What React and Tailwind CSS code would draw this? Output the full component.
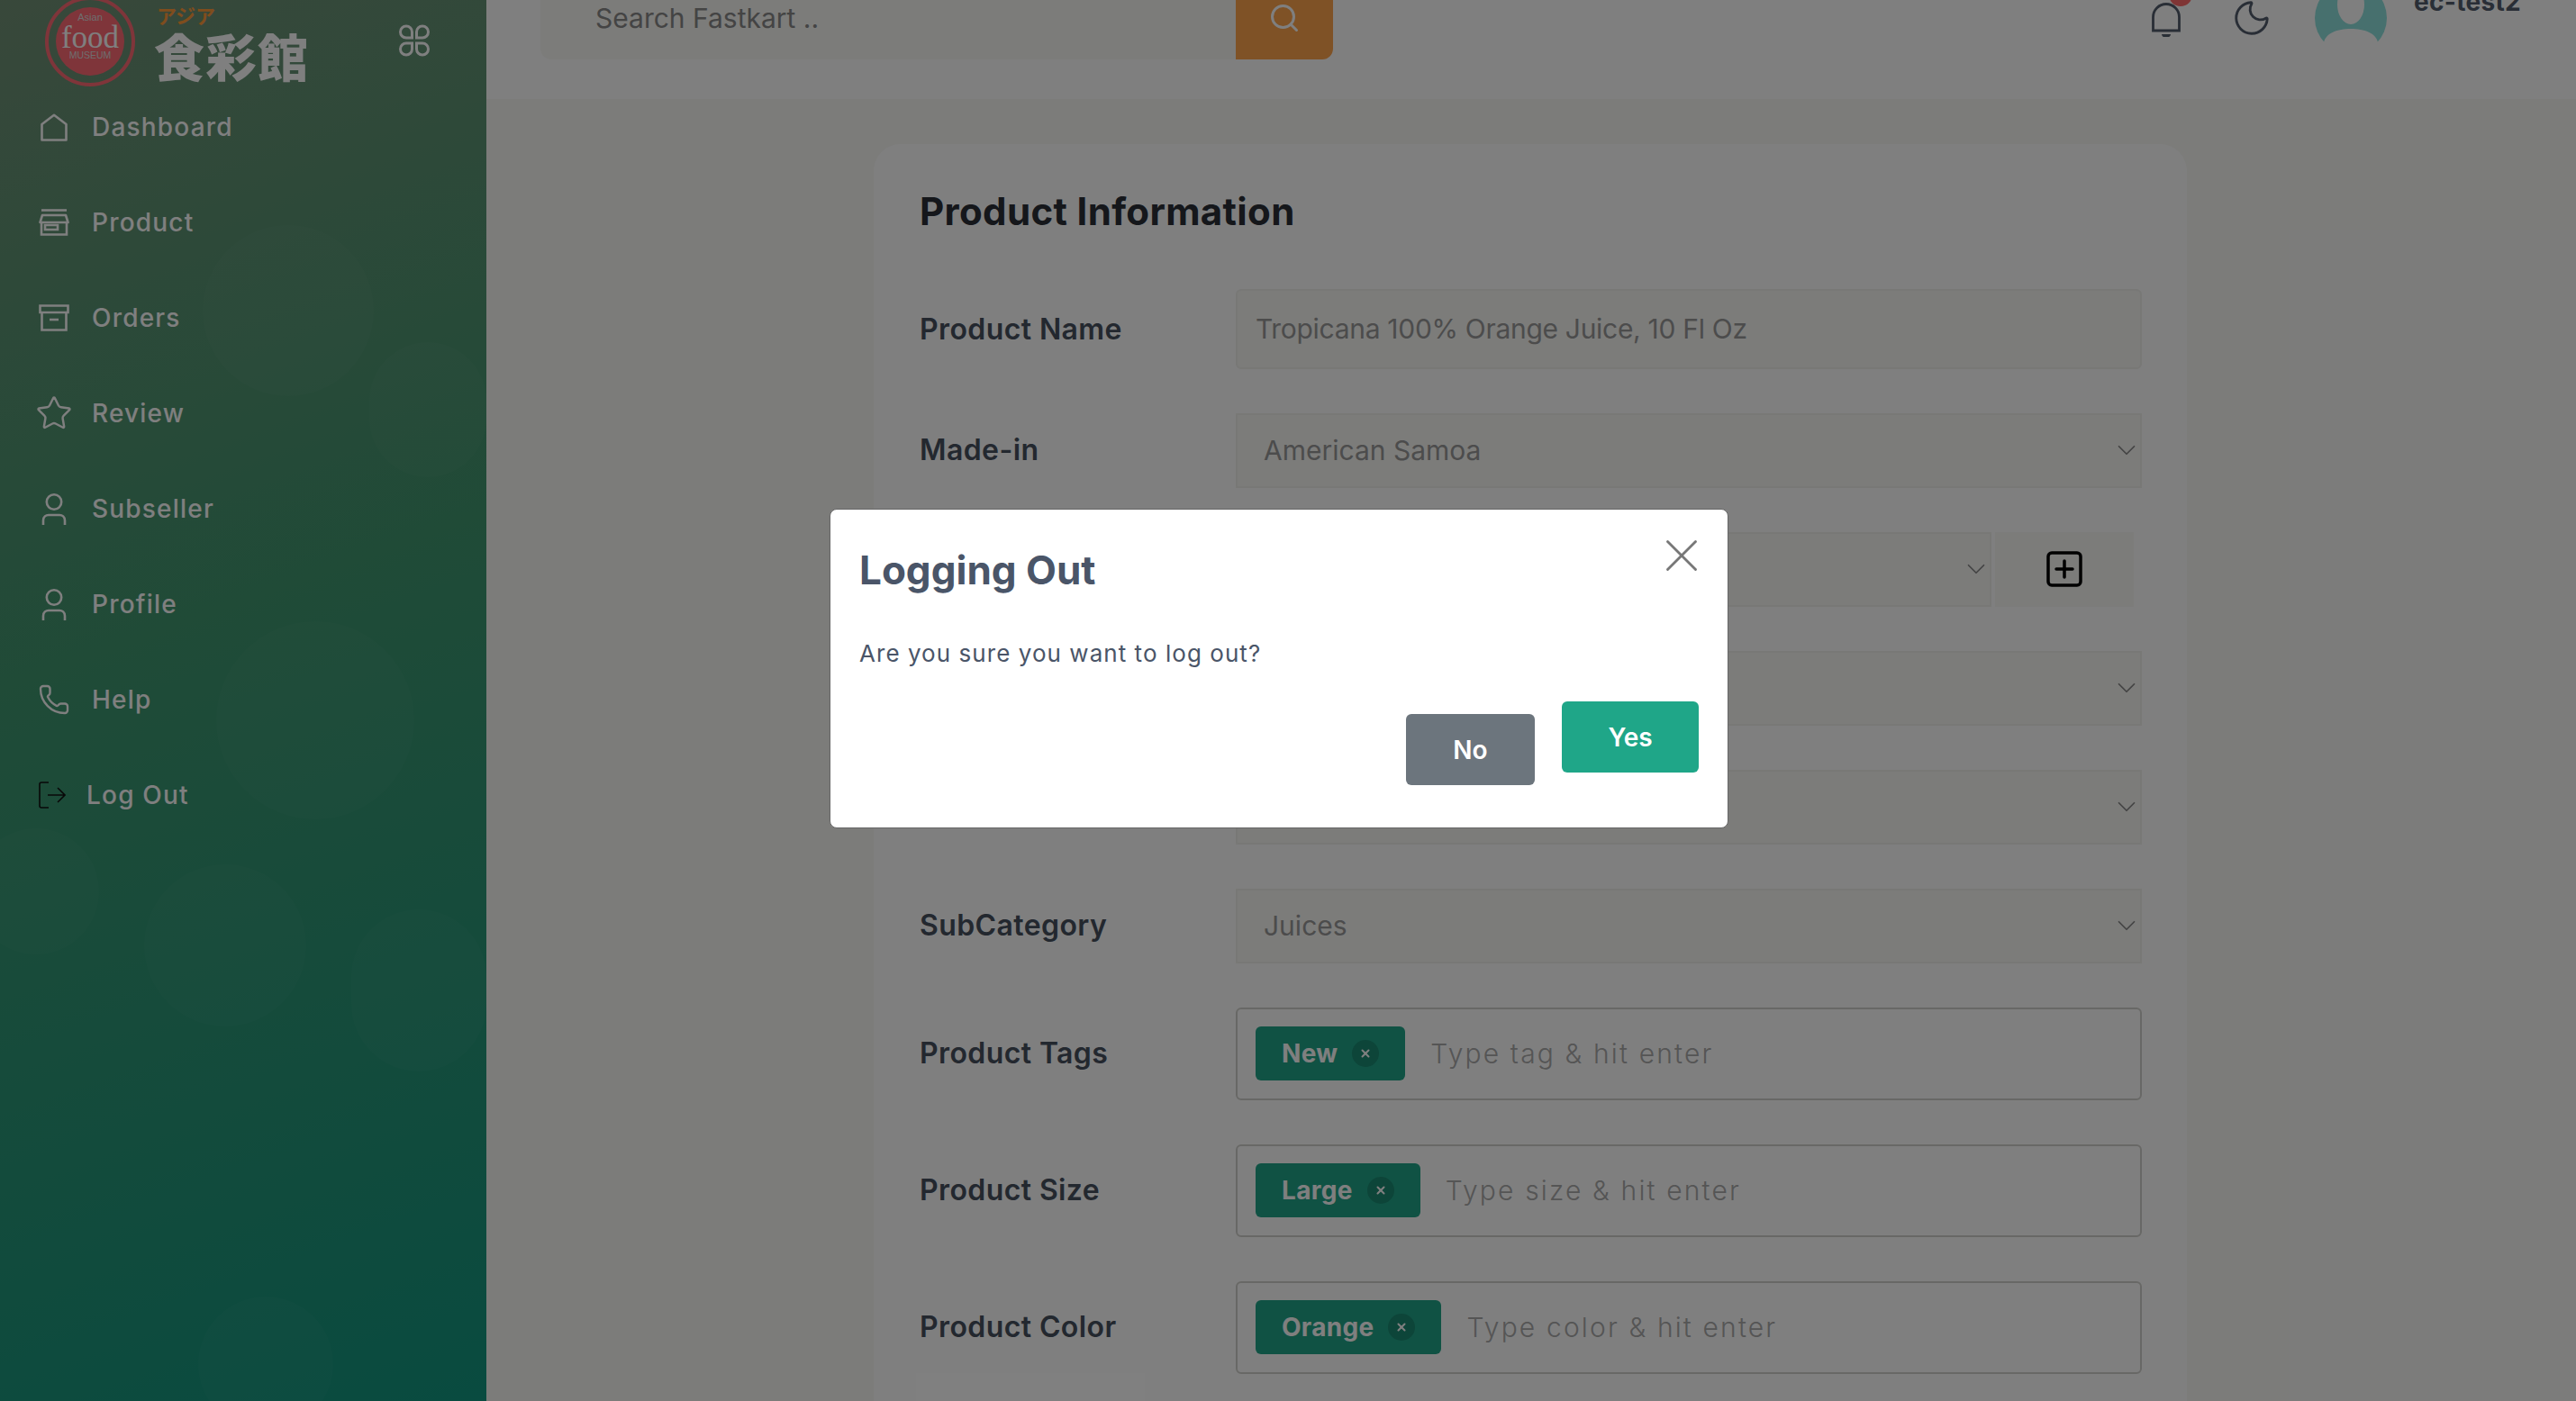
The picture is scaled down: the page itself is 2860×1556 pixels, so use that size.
import React from 'react';
import { ChevronDown, Phone, Star, Search, Moon, X } from 'lucide-react';

const HomeIcon = () => (
    <svg viewBox="0 0 30 31" className="w-[30px] h-[31px]" fill="none" stroke="currentColor" strokeWidth="2.6">
        <path d="M1.5 12 L15 1.8 L28.5 12 V29.5 H1.5 Z" strokeLinejoin="round" />
    </svg>
);

const ProductIcon = () => (
    <svg viewBox="0 0 34 30" className="w-[34px] h-[30px]" fill="none" stroke="currentColor" strokeWidth="2.6">
        <path d="M3 1.5 H31" />
        <path d="M4 7 H30 L32.5 15 H1.5 Z" strokeLinejoin="round" />
        <path d="M3 15 V28.5 H31 V15" />
        <path d="M7 18 H21 V23 H7 Z" />
    </svg>
);

const OrdersIcon = () => (
    <svg viewBox="0 0 34 30" className="w-[34px] h-[30px]" fill="none" stroke="currentColor" strokeWidth="2.6">
        <path d="M1.5 1.5 H32.5 V9 H1.5 Z" />
        <path d="M3.5 9 V28.5 H30.5 V9" />
        <path d="M12 17 H22" />
    </svg>
);

const UserIcon = () => (
    <svg viewBox="0 0 28 35" className="w-[28px] h-[35px]" fill="none" stroke="currentColor" strokeWidth="2.6">
        <circle cx="14" cy="9.5" r="8.2" />
        <path d="M2 35 V30 C2 26 5 24 8 24 H20 C23 24 26 26 26 30 V35" />
    </svg>
);

const LogoutIcon = () => (
    <svg viewBox="0 0 30 30" className="w-[30px] h-[30px]" fill="none" stroke="#111" strokeWidth="1.6">
        <path d="M11 1 H3 Q1 1 1 3 V27 Q1 29 3 29 H11" />
        <path d="M10 15 H29 M21 7 L29 15 L21 23" />
    </svg>
);

const AppsIcon = () => (
    <svg viewBox="0 0 34 36" className="w-[34px] h-[36px]" fill="none" stroke="currentColor" strokeWidth="3">
        <path d="M8 2 A6.5 6.5 0 0 1 14.5 8.5 V15 H8 A6.5 6.5 0 0 1 8 2 Z" />
        <path d="M26 2 A6.5 6.5 0 0 0 19.5 8.5 V15 H26 A6.5 6.5 0 0 0 26 2 Z" />
        <path d="M8 34 A6.5 6.5 0 0 0 14.5 27.5 V21 H8 A6.5 6.5 0 0 0 8 34 Z" />
        <path d="M26 34 A6.5 6.5 0 0 1 19.5 27.5 V21 H26 A6.5 6.5 0 0 1 26 34 Z" />
    </svg>
);

const BellIcon = () => (
    <svg viewBox="0 0 32 38" className="w-[32px] h-[38px]" fill="none" stroke="currentColor" strokeWidth="2.8">
        <path d="M1.5 31 V16 A14.5 14.5 0 0 1 30.5 16 V31 Z" />
        <path d="M11 35 H21 A5 4 0 0 1 11 35 Z" fill="currentColor" stroke="none" />
    </svg>
);

const Logo = () => (
    <svg viewBox="0 0 102 102" className="w-[102px] h-[102px] shrink-0">
        <circle cx="51" cy="51" r="48" fill="none" stroke="#ff6a74" strokeWidth="4" />
        <circle cx="51" cy="51" r="38" fill="#ff6a74" />
        <text x="51" y="28" textAnchor="middle" fontSize="11" fill="#ddd" fontFamily="Liberation Sans">Asian</text>
        <text x="51" y="58" textAnchor="middle" fontSize="35" fill="#fff" fontFamily="Liberation Serif">food</text>
        <text x="51" y="70" textAnchor="middle" fontSize="10.5" fill="#ddd" fontFamily="Liberation Sans">MUSEUM</text>
    </svg>
);

const menu = [
    { name: 'Dashboard', icon: <HomeIcon /> },
    { name: 'Product', icon: <ProductIcon /> },
    { name: 'Orders', icon: <OrdersIcon /> },
    { name: 'Review', icon: <Star size={42} strokeWidth={1.4} className="shrink-0" /> },
    { name: 'Subseller', icon: <UserIcon /> },
    { name: 'Profile', icon: <UserIcon /> },
    { name: 'Help', icon: <Phone size={36} strokeWidth={1.6} className="shrink-0" /> },
];

const bubbles = [
    'left-[225px] top-[290px] w-[190px] h-[190px]',
    'left-[410px] top-[420px] w-[130px] h-[150px]',
    'left-[240px] top-[730px] w-[220px] h-[220px]',
    'left-[160px] top-[1000px] w-[180px] h-[180px]',
    'left-[390px] top-[1050px] w-[150px] h-[180px]',
    'left-[-30px] top-[960px] w-[140px] h-[140px]',
    'left-[220px] top-[1480px] w-[150px] h-[150px]',
];

const Sidebar = () => (
    <aside className="relative w-[540px] shrink-0 overflow-hidden text-white bg-[linear-gradient(160deg,#749076_0%,#40966f_45%,#129680_100%)]">
        {bubbles.map((b) => (
            <div key={b} className={`absolute rounded-full bg-white/[0.025] ${b}`} />
        ))}
        <div className="relative flex items-start pl-[49px] pt-[35px] h-[128px]">
            <Logo />
            <div className="ml-[20px] mt-[7px] flex flex-col font-['Noto_Sans_CJK_JP',sans-serif]">
                <span className="text-[#ff9a3a] text-[22px] font-bold leading-[28px] ml-[3px]">アジア</span>
                <span className="font-black text-[56px] leading-[62px] tracking-[1.5px]">食彩館</span>
            </div>
            <div className="absolute left-[443px] top-[67px]">
                <AppsIcon />
            </div>
        </div>
        <nav className="relative flex flex-col">
            {menu.map((item) => (
                <div key={item.name} className="flex items-center h-[106px]">
                    <div className="w-[102px] pl-[30px] pr-[12px] flex justify-center shrink-0">{item.icon}</div>
                    <span className="text-[28px] font-medium tracking-[1.2px]">{item.name}</span>
                </div>
            ))}
            <div className="flex items-center h-[106px]">
                <div className="w-[96px] pl-[43px] shrink-0">
                    <LogoutIcon />
                </div>
                <span className="text-[28px] font-medium tracking-[1.2px]">Log Out</span>
            </div>
        </nav>
    </aside>
);

const Avatar = () => (
    <svg viewBox="0 0 80 80" className="w-[80px] h-[80px] shrink-0 ml-[47px] mt-[20px]">
        <circle cx="40" cy="40" r="40" fill="#8ee0dc" />
        <ellipse cx="40" cy="25" rx="15" ry="22" fill="#fff" />
        <path d="M10 67 C12 57 25 52 40 52 C55 52 68 57 70 67 V80 H10 Z" fill="#fff" />
    </svg>
);

const Header = () => (
    <header className="h-[150px] bg-white flex items-start pl-[60px] shrink-0">
        <div className="flex mt-[14px] h-[92px] w-[880px]">
            <div className="flex-1 bg-[#f8f8f5] rounded-l-xl flex items-center pl-[61px] text-[30px] text-[#888]">
                Search Fastkart ..
            </div>
            <div className="w-[108px] bg-[#ffa44c] rounded-r-xl flex items-center justify-center text-white">
                <Search size={36} strokeWidth={2} />
            </div>
        </div>
        <div className="relative ml-[909px] mt-[43px] text-[#525c6c]">
            <BellIcon />
            <div className="absolute left-[19px] top-[-22px] w-[26px] h-[26px] rounded-full bg-[#ff6a6a]" />
        </div>
        <Moon size={46} strokeWidth={1.5} className="ml-[56px] mt-[37px] text-[#525c6c] shrink-0" />
        <Avatar />
        <div className="ml-[30px] mt-[25px] text-[28px] font-bold text-[#525c6c] leading-[34px] tracking-[0.3px]">ec-test2</div>
    </header>
);

const Label = ({ children }) => (
    <label className="w-[351px] shrink-0 text-[32px] font-semibold text-[#47505e] tracking-[0.4px]">{children}</label>
);

const SelectBox = ({ value, className = 'flex-1' }) => (
    <div className={`${className} h-[83.5px] bg-[#f8f8f5] border-2 border-[#f0f0ec] flex items-center justify-between pl-[29px] text-[30px] text-[#999]`}>
        <span>{value}</span>
        <ChevronDown size={34} strokeWidth={1.2} className="text-[#888] -mr-[2px]" />
    </div>
);

const TagField = ({ label, tag, placeholder }) => (
    <div className="flex items-center">
        <Label>{label}</Label>
        <div className="flex-1 h-[103.5px] border-2 border-[#d0d0cc] rounded-md flex items-center pl-[20px]">
            <div className="h-[60px] bg-[#21a488] rounded-md flex items-center pl-[29px] pr-[29px] text-[28px] font-bold tracking-[0.3px] text-white">
                {tag}
                <span className="ml-[16px] w-[30px] h-[30px] rounded-full bg-[#1a8a72] flex items-center justify-center">
                    <X size={14} strokeWidth={3.5} />
                </span>
            </div>
            <span className="ml-[28px] text-[30px] font-light tracking-[2.15px] text-[#aaa]">{placeholder}</span>
        </div>
    </div>
);

const ProductCard = () => (
    <div className="w-[1458px] ml-[430px] mt-[50px] bg-white rounded-[30px] pl-[51px] pr-[50px] pt-[48px] pb-[200px]">
        <h2 className="text-[42px] font-bold text-[#2a2e36] leading-[54px] mb-[59px] tracking-[0.35px]">Product Information</h2>
        <div className="flex flex-col gap-[48.5px]">
            <div className="flex items-center">
                <Label>Product Name</Label>
                <div className="flex-1 h-[89px] bg-[#f8f8f5] border-2 border-[#f0f0ec] rounded-md flex items-center pl-[20px] text-[30px] tracking-[-0.3px] text-[#999]">
                    Tropicana 100% Orange Juice, 10 Fl Oz
                </div>
            </div>
            <div className="flex items-center">
                <Label>Made-in</Label>
                <SelectBox value="American Samoa" />
            </div>
            <div className="flex items-center">
                <Label>Brand</Label>
                <SelectBox value="Tropicana" className="w-[839px]" />
                <div className="ml-[4px] w-[154px] h-[83.5px] bg-[#f8f8f5] flex items-center justify-center">
                    <svg viewBox="0 0 40 40" className="w-[40px] h-[40px]" fill="none" stroke="#000" strokeWidth="3.5" strokeLinecap="round">
                        <rect x="2" y="2" width="36" height="36" rx="4" />
                        <path d="M20 11 V29 M11 20 H29" />
                    </svg>
                </div>
            </div>
            <div className="flex items-center">
                <Label>Unit</Label>
                <SelectBox value="Bottle" />
            </div>
            <div className="flex items-center">
                <Label>Category</Label>
                <SelectBox value="Beverages" />
            </div>
            <div className="flex items-center">
                <Label>SubCategory</Label>
                <SelectBox value="Juices" />
            </div>
            <TagField label="Product Tags" tag="New" placeholder="Type tag & hit enter" />
            <TagField label="Product Size" tag="Large" placeholder="Type size & hit enter" />
            <TagField label="Product Color" tag="Orange" placeholder="Type color & hit enter" />
        </div>
    </div>
);

const LogoutModal = () => (
    <div className="absolute left-[921px] top-[565px] w-[998px] h-[355px] bg-white rounded-lg border border-[#666] pl-[32px] pr-[32px] pt-[37px]">
        <div className="flex justify-between items-start">
            <h3 className="text-[44px] font-bold text-[#4a5568] leading-[60px]">Logging Out</h3>
            <X size={62} strokeWidth={1.1} className="text-[#777] -mr-[12px] -mt-[17px]" />
        </div>
        <p className="mt-[45px] text-[26px] text-[#4a5568] tracking-[1.05px] leading-[36px]">Are you sure you want to log out?</p>
        <div className="flex justify-end items-start gap-[30px] mt-[35px]">
            <button className="mt-[14px] w-[143px] h-[79px] bg-[#6c757d] rounded-md text-white text-[28px] font-semibold">No</button>
            <button className="w-[152px] h-[79px] bg-[#1fa688] rounded-md text-white text-[28px] font-semibold">Yes</button>
        </div>
    </div>
);

const App = () => {
    return (
        <div className="relative h-screen overflow-hidden font-['Inter',sans-serif]">
            <div className="flex h-[1596px] -mt-[40px]">
                <Sidebar />
                <main className="flex-1 flex flex-col bg-[#f8f8f5] overflow-hidden">
                    <Header />
                    <ProductCard />
                </main>
            </div>
            <div className="absolute inset-0 bg-black/50" />
            <LogoutModal />
        </div>
    );
};

export default App;
